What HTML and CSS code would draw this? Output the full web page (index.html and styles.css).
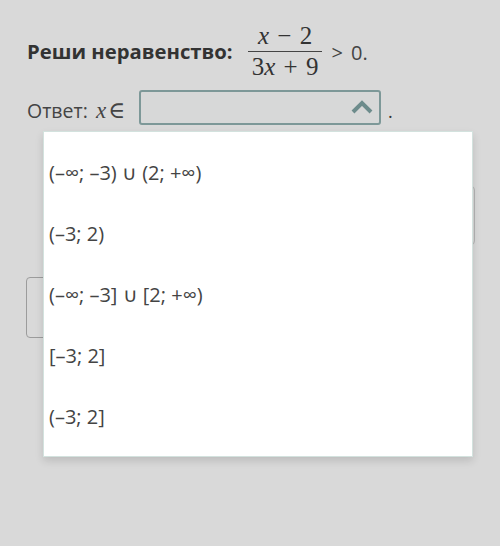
FILE: index.html
```html
<!DOCTYPE html>
<html lang="ru">
<head>
    <meta charset="UTF-8">
    <meta name="viewport" content="width=device-width, initial-scale=1.0">
    <title>Реши неравенство</title>
    <link rel="stylesheet" href="styles.css">
</head>
<body>
    <div class="task">
        <div class="task-title">
            <span class="label">Реши неравенство:</span>
            <span class="frac">
                <span class="num"><i>x</i><span class="op">−</span>2</span>
                <span class="den">3<i>x</i><span class="op">+</span>9</span>
            </span>
            <span class="rel">&gt; 0.</span>
        </div>

        <div class="answer-row">
            <span class="answer-label">Ответ: <i class="mx">x</i><span class="in">∈</span></span>
            <div class="select-wrap">
                <div class="select">
                    <svg class="chevron" width="22" height="14" viewBox="0 0 22 14">
                        <polyline points="2,12 11,3 20,12" fill="none" stroke="#6d8c8c" stroke-width="4" stroke-linejoin="miter"/>
                    </svg>
                </div>
                <!-- opened list of choices -->
                <ul class="options">
                    <li>(–∞; –3) ∪ (2; +∞)</li>
                    <li>(–3; 2)</li>
                    <li>(–∞; –3] ∪ [2; +∞)</li>
                    <li>[–3; 2]</li>
                    <li>(–3; 2]</li>
                </ul>
            </div>
            <span class="dot">.</span>
        </div>

        <div class="check-box"></div>
        <div class="btn-back"></div>
    </div>
</body>
</html>
```

FILE: styles.css
```css
body {
    margin: 0;
    min-height: 100vh;
    background-color: #d9d9d9;
    font-family: "Open Sans", Arial, sans-serif;
    color: #333;
}
.task {
    padding: 22px 0 0 27px;
}
.task-title {
    display: flex;
    align-items: center;
    height: 58px;
}
.label {
    font-weight: bold;
    font-size: 20.3px;
    color: #333;
}
.frac {
    display: inline-flex;
    flex-direction: column;
    align-items: center;
    margin-left: 15px;
    font-family: "Liberation Serif", "DejaVu Serif", serif;
    font-size: 25px;
    color: #333;
    line-height: 26px;
}
.op {
    margin: 0 0.33em;
}
.num {
    padding: 0 0 2px;
}
.den {
    padding: 2px 4px 0;
    border-top: 1px solid #444;
}
.rel {
    margin-left: 9px;
    margin-top: 2px;
    font-size: 20px;
    word-spacing: 3px;
    color: #444;
}

.answer-row {
    display: flex;
    align-items: center;
    margin-top: 9px;
    height: 36px;
}
.answer-label {
    font-size: 19.5px;
    color: #444;
    width: 112px;
    padding-top: 6px;
    white-space: nowrap;
}
.mx {
    font-family: "Liberation Serif", "DejaVu Serif", serif;
    font-size: 23px;
    margin-left: 3px;
}
.in {
    font-family: "DejaVu Serif", serif;
    font-size: 23px;
    margin-left: 2px;
}
.select-wrap {
    position: relative;
}
.select {
    width: 238px;
    height: 31px;
    border: 2px solid #7d9898;
    border-radius: 3px;
    background-color: #d7d8d8;
    display: flex;
    align-items: center;
    justify-content: flex-end;
}
.chevron {
    margin-right: 6px;
}
.dot {
    margin-left: 7px;
    font-size: 18px;
    align-self: flex-end;
    padding-bottom: 2px;
}
.options {
    position: absolute;
    top: 41px;
    left: -96px;
    width: 430px;
    margin: 0;
    padding: 10px 0 9px;
    list-style: none;
    background-color: #fff;
    border: 1px solid #d3e2de;
    box-sizing: border-box;
    box-shadow: 0 4px 8px rgba(0, 0, 0, 0.13);
    z-index: 2;
}
.options li {
    height: 61px;
    line-height: 61px;
    padding-left: 5px;
    font-size: 20px;
    color: #444;
}

/* blocks under the open list */
.check-box {
    margin: 61px 25px 0 60px;
    height: 57px;
    border: 1px solid #b4b4b4;
    border-radius: 4px;
}
.btn-back {
    margin: 32px 0 0 -1px;
    width: 120px;
    height: 59px;
    border: 1px solid #9c9c9c;
    border-radius: 4px;
}
```
